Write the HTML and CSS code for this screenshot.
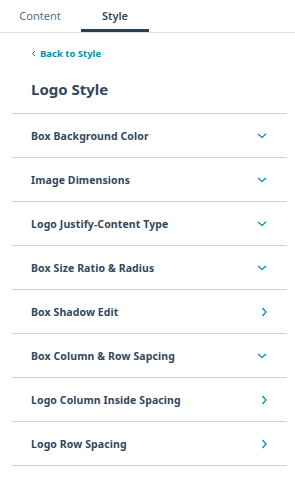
FILE: index.html
```html
<!DOCTYPE html>
<html lang="en">
<head>
    <meta charset="UTF-8">
    <meta name="viewport" content="width=device-width, initial-scale=1.0">
    <title>Logo Style</title>
    <link rel="stylesheet" href="styles.css">
</head>
<body>
    <div class="tabs">
        <div class="tab">Content</div>
        <div class="tab active">Style</div>
    </div>
    <div class="panel">
        <a class="back" href="#">
            <svg width="6" height="7" viewBox="0 0 6 7"><path d="M4 1L1.5 3.5L4 6" fill="none" stroke="#0091ae" stroke-width="1"/></svg>
            Back to Style
        </a>
        <h1>Logo Style</h1>
        <ul class="list">
            <li><span>Box Background Color</span><svg class="down" viewBox="0 0 10 6"><path d="M1 1L5 4.5L9 1"/></svg></li>
            <li><span>Image Dimensions</span><svg class="down" viewBox="0 0 10 6"><path d="M1 1L5 4.5L9 1"/></svg></li>
            <li><span>Logo Justify-Content Type</span><svg class="down" viewBox="0 0 10 6"><path d="M1 1L5 4.5L9 1"/></svg></li>
            <li><span>Box Size Ratio &amp; Radius</span><svg class="down" viewBox="0 0 10 6"><path d="M1 1L5 4.5L9 1"/></svg></li>
            <li><span>Box Shadow Edit</span><svg class="right" viewBox="0 0 6 10"><path d="M1.5 1L5 5L1.5 9"/></svg></li>
            <li><span>Box Column &amp; Row Sapcing</span><svg class="down" viewBox="0 0 10 6"><path d="M1 1L5 4.5L9 1"/></svg></li>
            <li><span>Logo Column Inside Spacing</span><svg class="right" viewBox="0 0 6 10"><path d="M1.5 1L5 5L1.5 9"/></svg></li>
            <li><span>Logo Row Spacing</span><svg class="right" viewBox="0 0 6 10"><path d="M1.5 1L5 5L1.5 9"/></svg></li>
        </ul>
    </div>
</body>
</html>
```

FILE: styles.css
```css
*{
    margin: 0;
    padding: 0;
    box-sizing: border-box;
}
body{
    font-family: "Noto Sans", Lato, sans-serif;
    color: #33475b;
    background: #fff;
}
.tabs{
    display: flex;
    gap: 7px;
    padding-left: 6px;
    border-bottom: 1px solid #dfe3eb;
}
.tab{
    width: 68px;
    height: 32px;
    display: flex;
    justify-content: center;
    align-items: center;
    font-size: 11px;
    color: #516f90;
    border-bottom: 3px solid transparent;
    padding-top: 2px;
}
.tab.active{
    color: #33475b;
    font-weight: 600;
    border-bottom-color: #2d3e50;
}
.panel{
    padding: 0 8px 0 12px;
}
.back{
    display: flex;
    align-items: center;
    gap: 3px;
    margin-top: 13px;
    padding-left: 19px;
    height: 14px;
    font-size: 9.5px;
    font-weight: 700;
    color: #0091ae;
    text-decoration: none;
}
h1{
    font-size: 15px;
    font-weight: 700;
    padding-left: 19px;
    margin-top: 19px;
    height: 20px;
    line-height: 20px;
    margin-bottom: 14px;
}
.list{
    list-style: none;
    border-top: 1px solid #cbd6e2;
}
.list li{
    display: flex;
    justify-content: space-between;
    align-items: center;
    height: 44px;
    padding: 0 20px 0 19px;
    border-bottom: 1px solid #cbd6e2;
    font-size: 10.5px;
    font-weight: 700;
    letter-spacing: 0.1px;
}
.list svg{
    fill: none;
    stroke: #0091ae;
    stroke-width: 1.3;
}
.down{
    width: 10px;
    height: 6px;
}
.right{
    width: 6px;
    height: 10px;
}
```
